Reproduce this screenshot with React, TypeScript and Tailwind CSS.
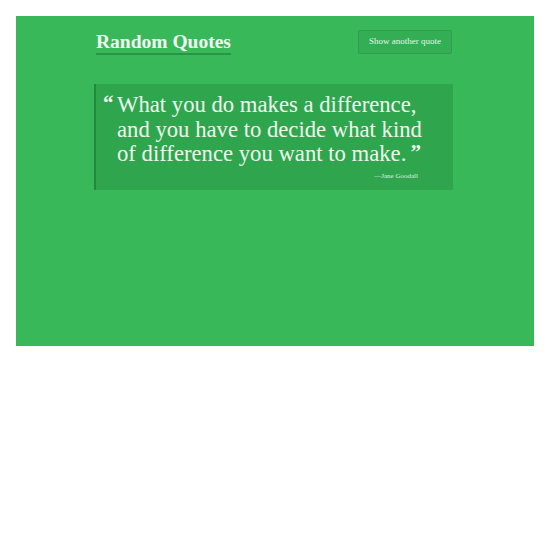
import React from "react";

export default function App() {
  return (
    <div className="p-4 w-[550px]">
      <div className="h-[330px] bg-[#39b85a] pt-[14px] font-['Liberation_Serif',serif]">
        <div className="w-[359px] ml-[78px]">
          <div className="flex items-start justify-between pl-[2px]">
            <h1 className="mt-[1px] text-[19.5px] leading-[22px] font-bold text-[#f1faf2] border-b-2 border-[#2a9447]">
              Random Quotes
            </h1>
            <button className="h-[24px] w-[94px] rounded-[2px] border border-[#2ea04c] bg-[#34ae55] text-[9px] text-[#e6f4e8] mr-[1px]">
              Show another quote
            </button>
          </div>
          <div className="mt-[29px] h-[106px] bg-[#2fa64e] border-l-2 border-[#23883d] pl-[21px] pt-[9px] pr-[20px] relative">
            <p className="text-[22.7px] leading-[24.5px] text-[#eef8ef] relative">
              <span className="absolute left-[-14px] top-[-2px] text-[21px] font-bold">“</span>
              What you do makes a difference,
              <br />
              and you have to decide what kind
              <br />
              of difference you want to make.
              <span className="text-[21px] font-bold align-top leading-[20px] ml-[4px]">”</span>
            </p>
            <div className="text-right text-[7px] text-[#dff1e2] pr-[15px] mt-[4px]">—Jane Goodall</div>
          </div>
        </div>
      </div>
    </div>
  );
}
